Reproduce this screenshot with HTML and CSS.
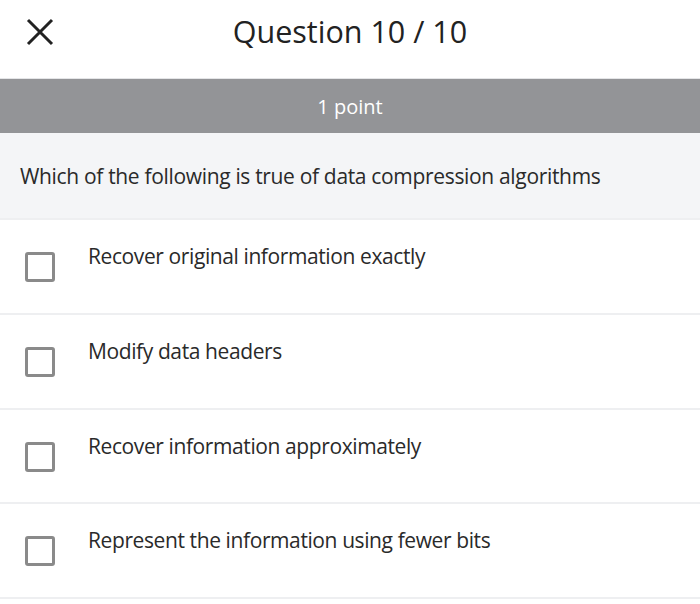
FILE: index.html
```html
<!DOCTYPE html>
<html>
<head>
<meta charset="utf-8">
<link rel="stylesheet" href="styles.css">
</head>
<body>
<div class="screen">
  <header class="top">
    <svg class="close" width="28" height="28" viewBox="0 0 28 28"><path d="M2 2 L26 26 M26 2 L2 26" stroke="#222" stroke-width="3" fill="none"/></svg>
    <h1 class="title">Question 10 / 10</h1>
  </header>
  <div class="points">1 point</div>
  <div class="question">Which of the following is true of data compression algorithms</div>
  <ul class="options">
    <li class="option"><span class="box"></span><span class="label">Recover original information exactly</span></li>
    <li class="option"><span class="box"></span><span class="label">Modify data headers</span></li>
    <li class="option"><span class="box"></span><span class="label">Recover information approximately</span></li>
    <li class="option"><span class="box"></span><span class="label">Represent the information using fewer bits</span></li>
  </ul>
</div>
</body>
</html>
```
FILE: styles.css
```css
* { box-sizing: border-box; }
html, body { margin: 0; padding: 0; background: #fff; }
body { font-family: "Open Sans", "Noto Sans", sans-serif; color: #2a2a2a; }
.screen { width: 700px; }
.top {
  height: 78px;
  display: flex;
  align-items: flex-start;
  justify-content: center;
  padding-top: 9px;
  position: relative;
}
.close { position: absolute; left: 26px; top: 18px; }
.title { margin: 0; font-weight: 400; font-size: 30.5px; line-height: 44px; color: #222; }
.points {
  height: 55px;
  background: #939497;
  color: #fff;
  font-size: 20px;
  display: flex;
  align-items: center;
  justify-content: center;
  border-top: 1px solid #e4e5e7;
}
.question {
  height: 85px;
  background: #f4f5f7;
  display: flex;
  align-items: center;
  padding-left: 20px;
  font-size: 21px;
  color: #2a2a2a;
  letter-spacing: -0.33px;
}
.options { list-style: none; margin: 0; padding: 0; border-bottom: 2px solid #eeeff1; }
.option {
  height: 94.75px;
  border-top: 2px solid #eeeff1;
  display: flex;
  align-items: flex-start;
  padding-left: 25px;
}
.box {
  width: 30px;
  height: 30px;
  border: 3px solid #8a8a8a;
  border-radius: 3px;
  margin-top: 32px;
  flex: none;
}
.label {
  margin-left: 33px;
  margin-top: 22px;
  font-size: 21px;
  letter-spacing: -0.4px;
}
```
